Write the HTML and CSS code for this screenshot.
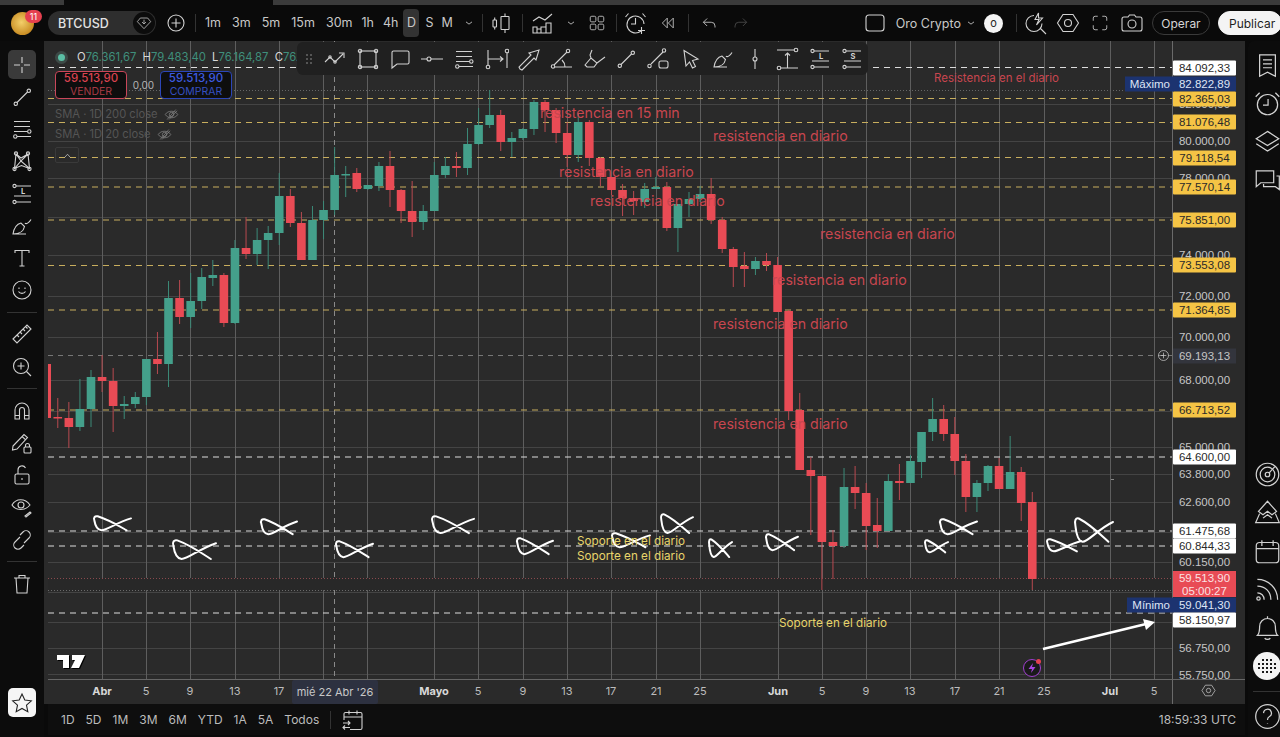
FILE: index.html
```html
<!DOCTYPE html>
<html lang="es">
  <head>
    <meta charset="UTF-8" />
    <meta name="viewport" content="width=device-width, initial-scale=1.0" />
    <title>BTCUSD - Oro Crypto</title>
    <link rel="stylesheet" href="styles.css">
  </head>
  <body>
    <svg class="icon-defs" width="0" height="0" aria-hidden="true">
      <symbol id="i-cross" viewBox="0 0 24 24"><path d="M12 4v6M12 14v6M4 12h6M14 12h6"/></symbol>
      <symbol id="i-line" viewBox="0 0 24 24"><path d="M7 17.5 17.5 7"/><circle cx="5.8" cy="18.8" r="1.7"/><circle cx="18.8" cy="5.8" r="1.7"/></symbol>
      <symbol id="i-fib" viewBox="0 0 24 24"><path d="M4 4.5h16M4 9.500h16M4 14.500h13.500M7 19.500h14"/><circle cx="19.300" cy="14.500" r="1.700"/><circle cx="5.300" cy="19.500" r="1.700"/></symbol>
      <symbol id="i-nodes" viewBox="0 0 24 24"><path d="M6 5 4.500 19.500 11 12 19.500 19.500 18 5 11 12ZM6 5l5 4 7-4M4.500 19.500l7-3 8 3"/><circle cx="6" cy="4.500" r="1.600"/><circle cx="18" cy="4.500" r="1.600"/><circle cx="4.500" cy="20" r="1.600"/><circle cx="19.500" cy="20" r="1.600"/></symbol>
      <symbol id="i-long" viewBox="0 0 24 24"><path d="M6 4h15M4 14h17M6 20h15"/><circle cx="4.500" cy="4" r="1.600"/><circle cx="4.500" cy="20" r="1.600"/><text class="glyph" x="13" y="11.500" text-anchor="middle">L</text></symbol>
      <symbol id="i-short" viewBox="0 0 24 24"><path d="M6 4h15M4 14h17M6 20h15"/><circle cx="4.500" cy="4" r="1.600"/><circle cx="4.500" cy="20" r="1.600"/><text class="glyph" x="13" y="11.500" text-anchor="middle">S</text></symbol>
      <symbol id="i-brush" viewBox="0 0 24 24"><path d="M3 20c1-6 4-10 8-11l3.500 3.500c-1 5-5.500 7.500-11.500 7.500ZM3 20h13M15 9c1 1.500 4 0 6-3.500"/></symbol>
      <symbol id="i-text" viewBox="0 0 24 24"><path d="M5 7V4.500h14V7M12 4.500V20M9.500 20h5"/></symbol>
      <symbol id="i-smile" viewBox="0 0 24 24"><circle cx="12" cy="12" r="9"/><path d="M8.500 13.500c1.500 2.500 5.500 2.500 7 0M9 9.500v1.500M15 9.500v1.500"/></symbol>
      <symbol id="i-ruler" viewBox="0 0 24 24"><path d="M3 17 17 3l4 4L7 21ZM7 13l2 2M10 10l2 2M13 7l2 2M16 5l1.500 1.500"/></symbol>
      <symbol id="i-zoom" viewBox="0 0 24 24"><circle cx="11" cy="11" r="7.500"/><path d="M16.500 16.500 21 21M11 7.500v7M7.500 11h7"/></symbol>
      <symbol id="i-magnet" viewBox="0 0 24 24"><path d="M5 20v-9a7 7 0 0 1 14 0v9h-4.500v-9a2.500 2.500 0 0 0-5 0v9ZM5 16.500h4.500M14.500 16.500H19"/></symbol>
      <symbol id="i-pencil-lock" viewBox="0 0 24 24"><path d="M3 15 14 3.500l3.500 3L7 18l-4.500 1ZM12 5.500l3.500 3.200"/><rect x="14" y="16" width="7" height="6" rx="1"/><path d="M15.500 16v-1.500a2 2 0 0 1 4 0V16"/></symbol>
      <symbol id="i-lock" viewBox="0 0 24 24"><rect x="5" y="11" width="14" height="10" rx="1.500"/><path d="M8 11V7a4 4 0 0 1 7.500-2M12 15v2"/></symbol>
      <symbol id="i-eye" viewBox="0 0 24 24"><path d="M2 10c4-7 13-7 18 0-5 6-14 6-18 0Z"/><circle cx="11" cy="10" r="3"/><path d="m15 21 5-4 1 1-5 4Z"/></symbol>
      <symbol id="i-link" viewBox="0 0 24 24"><path d="m10 7 3-3a4 4 0 0 1 6 6l-5 5M14 17l-3 3a4 4 0 0 1-6-6l5-5"/></symbol>
      <symbol id="i-trash" viewBox="0 0 24 24"><path d="M4 6h16M9 6V3.500h6V6M6 6l1 15h10l1-15"/></symbol>
      <symbol id="i-star" viewBox="0 0 24 24"><path d="m12 3 2.800 6 6.500.8-4.800 4.400 1.300 6.500L12 17.400l-5.800 3.300 1.300-6.500L2.700 9.800 9.200 9Z"/></symbol>
      <symbol id="i-trend" viewBox="0 0 24 24"><path d="m2 15 5-5 5 5 8-8M16 6h5v5"/><circle cx="7" cy="10" r="1.200"/><circle cx="12" cy="15" r="1.200"/></symbol>
      <symbol id="i-rect" viewBox="0 0 24 24"><rect x="4" y="4" width="16" height="16"/><circle cx="4" cy="4" r="1.700"/><circle cx="20" cy="4" r="1.700"/><circle cx="4" cy="20" r="1.700"/><circle cx="20" cy="20" r="1.700"/></symbol>
      <symbol id="i-note" viewBox="0 0 24 24"><path d="M4 5.500A1.500 1.500 0 0 1 5.500 4h14A1.500 1.500 0 0 1 21 5.500v10a1.500 1.500 0 0 1-1.500 1.500H9l-5 4Z"/></symbol>
      <symbol id="i-ray" viewBox="0 0 24 24"><path d="M1 12h6M11 12h12"/><circle cx="9" cy="12" r="2"/></symbol>
      <symbol id="i-measure" viewBox="0 0 24 24"><path d="M3 3v15M22 6v15M3 12h15M15 9.500l3 2.500-3 2.500"/><circle cx="3" cy="20" r="1.800"/><circle cx="22" cy="4" r="1.800"/></symbol>
      <symbol id="i-arrow" viewBox="0 0 24 24"><path d="m3 22-1-2 12-12-2-2 10-3-3 10-2-2L5 23Z"/></symbol>
      <symbol id="i-angle" viewBox="0 0 24 24"><path d="M5 18 18 5M6 20h17M13 13c2 2 3 4 3 7"/><circle cx="4" cy="19.500" r="1.700"/><circle cx="19" cy="4" r="1.700"/></symbol>
      <symbol id="i-marker" viewBox="0 0 24 24"><path d="m3 18 6-7 6 5-3 4H5ZM9 11l-1-3 2-5M15 16l8-6M7 20h5"/></symbol>
      <symbol id="i-seg-box" viewBox="0 0 24 24"><path d="M5 17 17 5"/><circle cx="3.500" cy="19" r="1.700"/><circle cx="18" cy="3.500" r="1.700"/><rect x="13" y="14" width="9" height="7" rx="2"/></symbol>
      <symbol id="i-cursor" viewBox="0 0 24 24"><path d="M5 3.500 19 12l-5.500 1.500 3 6-3 1.500-3-6L7 19Z"/></symbol>
      <symbol id="i-vline" viewBox="0 0 24 24"><path d="M12 2v8M12 14v8"/><circle cx="12" cy="12" r="2"/></symbol>
      <symbol id="i-range" viewBox="0 0 24 24"><path d="M2 3h17M6 21h17M12.500 6v15M10 8.500 12.500 6 15 8.500"/><circle cx="21" cy="3" r="1.800"/><circle cx="4" cy="21" r="1.800"/></symbol>
      <symbol id="i-diamond" viewBox="0 0 24 24"><path d="M6.500 4.500h11L22 10 12 20.500 2 10ZM12 7v6M9 10.500l3 3 3-3"/></symbol>
      <symbol id="i-plus" viewBox="0 0 24 24"><circle cx="12" cy="12" r="8"/><path d="M12 7.500v9M7.500 12h9"/></symbol>
      <symbol id="i-chev" viewBox="0 0 24 24"><path d="m8 10.500 4 3 4-3"/></symbol>
      <symbol id="i-up" viewBox="0 0 24 24"><path d="m7.500 15 4.500-5 4.500 5"/></symbol>
      <symbol id="i-candles" viewBox="0 0 24 24"><rect x="3" y="9" width="3.500" height="7" rx=".5"/><path d="M4.700 6.500V9M4.700 16v2.500"/><rect x="11" y="5.500" width="8" height="13" rx=".5"/><path d="M15 2.500v3M15 18.500v3.500"/></symbol>
      <symbol id="i-indicators" viewBox="0 0 24 24"><path d="m2 10 6-4 6 3 7-6M2 16h4v6H2ZM6 18h4v4H6ZM10 16h5v6h-5ZM15 12h5v10h-5Z"/></symbol>
      <symbol id="i-grid" viewBox="0 0 24 24"><rect x="3" y="3" width="7.500" height="7.500" rx="2"/><rect x="13.500" y="3" width="7.500" height="7.500" rx="2"/><rect x="3" y="13.500" width="7.500" height="7.500" rx="2"/><rect x="13.500" y="13.500" width="7.500" height="7.500" rx="2"/></symbol>
      <symbol id="i-alarm" viewBox="0 0 24 24"><path d="M17 20a8.500 8.500 0 1 1 3-7M11.500 7v6H7M17.500 16v7M14 19.500h7M1.500 6l3-3.500M21.500 6l-3-3.500"/></symbol>
      <symbol id="i-replay" viewBox="0 0 24 24"><path d="M11 5.500 4.500 12l6.500 6.500ZM19 5.500 12.500 12l6.500 6.500Z"/></symbol>
      <symbol id="i-undo" viewBox="0 0 24 24"><path d="m9.500 6-5 5 5 5M4.500 11H15a5 5 0 0 1 5 5v2"/></symbol>
      <symbol id="i-redo" viewBox="0 0 24 24"><path d="m14.500 6 5 5-5 5M19.500 11H9a5 5 0 0 0-5 5v2"/></symbol>
      <symbol id="i-layout" viewBox="0 0 24 24"><rect x="3" y="4" width="18" height="16" rx="3"/></symbol>
      <symbol id="i-flash" viewBox="0 0 24 24"><path d="M10 4.500a8 8 0 1 0 8 8M16.500 17.500 22 23M14.500 2l-3.500 6.500h4L12.500 14l6-7h-4Z"/></symbol>
      <symbol id="i-hex" viewBox="0 0 24 24"><path d="M7 3.500h10l5.500 8.500-5.500 8.500H7L1.500 12Z"/><circle cx="12" cy="12" r="3.500"/></symbol>
      <symbol id="i-full" viewBox="0 0 24 24"><path d="M3 9V5.500A2.500 2.500 0 0 1 5.500 3H9M15 3h3.500A2.500 2.500 0 0 1 21 5.500V9M21 15v3.500a2.500 2.500 0 0 1-2.500 2.500H15M9 21H5.500A2.500 2.500 0 0 1 3 18.500V15"/></symbol>
      <symbol id="i-camera" viewBox="0 0 24 24"><path d="M2 8a2 2 0 0 1 2-2h4l1.500-2h5L16 6h4a2 2 0 0 1 2 2v10a2 2 0 0 1-2 2H4a2 2 0 0 1-2-2Z"/><circle cx="12" cy="13" r="4"/></symbol>
      <symbol id="i-eye-off" viewBox="0 0 24 24"><path d="M2 12c4-7 16-7 20 0-4 7-16 7-20 0Z"/><circle cx="12" cy="12" r="3.500"/><path d="M5 20 19 4M8 20 21 6"/></symbol>
      <symbol id="i-calendar-swap" viewBox="0 0 24 24"><path d="M3 12V6a1.500 1.500 0 0 1 1.500-1.500h15A1.500 1.500 0 0 1 21 6v14a1.500 1.500 0 0 1-1.500 1.500H9M3 9h18M8 2.500v4M16 2.500v4M2 15h7M7 13l2 2-2 2M9 19.500H2M4 17.500l-2 2 2 2"/></symbol>
      <symbol id="i-list" viewBox="0 0 24 24"><path d="M5 2.500h14v19l-7-3.500-7 3.500ZM8 7h8M8 10.500h8M8 14h8"/></symbol>
      <symbol id="i-clock" viewBox="0 0 24 24"><circle cx="12" cy="13" r="9"/><path d="M12.500 8v5.500H8M1.500 6 5 2.500M22.500 6 19 2.500"/></symbol>
      <symbol id="i-layers" viewBox="0 0 24 24"><path d="M12 3 22 9.500 12 15.500 2 9.500ZM2 14l10 6.500L22 14"/></symbol>
      <symbol id="i-chat" viewBox="0 0 24 24"><path d="M2 3.500h15.500V14H6l-4 3.500ZM20 8h2.500v12l-3.500-2.500H8.500V15"/></symbol>
      <symbol id="i-radar" viewBox="0 0 24 24"><circle cx="12" cy="12" r="10"/><circle cx="12" cy="12" r="6.500"/><circle cx="12" cy="12" r="2"/><path d="m13.500 10.500 5-5.500"/></symbol>
      <symbol id="i-peaks" viewBox="0 0 24 24"><path d="M12 2 20 11l-4 3-4-3-4 3-4-3ZM5 13 1.500 21h21L19 13M8 17l4-3 4 3"/></symbol>
      <symbol id="i-calendar" viewBox="0 0 24 24"><rect x="2" y="4" width="20" height="18" rx="3"/><path d="M2 9.500h20M7 2v5M17 2v5"/></symbol>
      <symbol id="i-signal" viewBox="0 0 24 24"><path d="M3 3c10 0 18 8 18 18M3 9c7 0 12 5 12 12M3 15c3.500 0 6 2.500 6 6"/><circle cx="4" cy="20" r="1.500"/></symbol>
      <symbol id="i-bell" viewBox="0 0 24 24"><path d="M3 19c2-2 2-4 2-8a7 7 0 0 1 14 0c0 4 0 6 2 8ZM12 2v2M9.500 21.500c1 1.500 4 1.500 5 0"/></symbol>
      <symbol id="i-help" viewBox="0 0 24 24"><circle cx="12" cy="12" r="10.500"/><path d="M8.500 9a3.500 3.500 0 1 1 5 3.200c-1 .5-1.500 1.300-1.500 2.800M12 18v.5"/></symbol>
    </svg>

    <div class="window-strip"><span class="strip-seg strip-left"></span><span class="strip-seg strip-gap"></span><span class="strip-seg strip-right"></span></div>

    <div class="header">
      <div class="avatar"><span class="avatar-badge">11</span></div>
      <div class="symbol-pill">
        <span>BTCUSD</span>
        <span class="symbol-badge"><svg class="icon small"><use href="#i-diamond"/></svg></span>
      </div>
      <button class="head-btn add-btn"><svg class="icon"><use href="#i-plus"/></svg></button>
      <span class="head-sep"></span>
      <div class="intervals">
        <a>1m</a><a>3m</a><a>5m</a><a>15m</a><a>30m</a><a>1h</a><a>4h</a><a class="active">D</a><a>S</a><a>M</a>
      </div>
      <button class="head-btn chev-btn"><svg class="icon small"><use href="#i-chev"/></svg></button>
      <span class="head-sep"></span>
      <button class="head-btn wide"><svg class="icon"><use href="#i-candles"/></svg></button>
      <span class="head-sep roomy"></span>
      <button class="head-btn wide"><svg class="icon"><use href="#i-indicators"/></svg></button>
      <button class="head-btn chev-btn indicators-chev"><svg class="icon small"><use href="#i-chev"/></svg></button>
      <button class="head-btn wide"><svg class="icon small"><use href="#i-grid"/></svg></button>
      <span class="head-sep"></span>
      <button class="head-btn wide"><svg class="icon"><use href="#i-alarm"/></svg></button>
      <button class="head-btn wide"><svg class="icon small"><use href="#i-replay"/></svg></button>
      <span class="head-sep roomy"></span>
      <button class="head-btn wide"><svg class="icon small"><use href="#i-undo"/></svg></button>
      <button class="head-btn wide muted"><svg class="icon small"><use href="#i-redo"/></svg></button>

      <div class="header-right">
        <svg class="icon"><use href="#i-layout"/></svg>
        <span class="layout-name">Oro Crypto</span>
        <button class="head-btn chev-btn"><svg class="icon small"><use href="#i-chev"/></svg></button>
        <span class="user-dot">o</span>
        <span class="head-sep"></span>
        <button class="head-btn wide"><svg class="icon"><use href="#i-flash"/></svg></button>
        <button class="head-btn wide"><svg class="icon"><use href="#i-hex"/></svg></button>
        <button class="head-btn wide"><svg class="icon small"><use href="#i-full"/></svg></button>
        <button class="head-btn wide"><svg class="icon"><use href="#i-camera"/></svg></button>
        <button class="pill-btn">Operar</button>
        <button class="pill-btn publish">Publicar</button>
      </div>
    </div>

    <div class="main-content">
      <div class="left-bar">
        <button class="tool active"><svg class="icon"><use href="#i-cross"/></svg></button>
        <button class="tool"><svg class="icon"><use href="#i-line"/></svg></button>
        <button class="tool"><svg class="icon"><use href="#i-fib"/></svg></button>
        <button class="tool"><svg class="icon"><use href="#i-nodes"/></svg></button>
        <button class="tool"><svg class="icon"><use href="#i-long"/></svg></button>
        <button class="tool"><svg class="icon"><use href="#i-brush"/></svg></button>
        <button class="tool"><svg class="icon"><use href="#i-text"/></svg></button>
        <button class="tool"><svg class="icon"><use href="#i-smile"/></svg></button>
        <span class="bar-sep"></span>
        <button class="tool"><svg class="icon"><use href="#i-ruler"/></svg></button>
        <button class="tool"><svg class="icon"><use href="#i-zoom"/></svg></button>
        <span class="bar-sep"></span>
        <button class="tool"><svg class="icon"><use href="#i-magnet"/></svg></button>
        <button class="tool"><svg class="icon"><use href="#i-pencil-lock"/></svg></button>
        <button class="tool"><svg class="icon"><use href="#i-lock"/></svg></button>
        <button class="tool"><svg class="icon"><use href="#i-eye"/></svg></button>
        <button class="tool"><svg class="icon"><use href="#i-link"/></svg></button>
        <span class="bar-sep"></span>
        <button class="tool"><svg class="icon"><use href="#i-trash"/></svg></button>
        <button class="tool star"><svg class="icon"><use href="#i-star"/></svg></button>
      </div>

      <div class="chart-column">
        <div class="pane" id="pane">
          <svg class="plot" id="plot" viewBox="44 41 1201 663"></svg>

          <div class="legend">
            <div class="legend-ohlc">
              <span class="status-dot"></span>
              <span class="ohlc"><b>O</b>76.361,67 <b>H</b>79.483,40 <b>L</b>76.164,87 <b>C</b>76.361,67</span>
            </div>
            <div class="trade-row">
              <div class="trade-box sell"><strong>59.513,90</strong><span>VENDER</span></div>
              <span class="spread">0,00</span>
              <div class="trade-box buy"><strong>59.513,90</strong><span>COMPRAR</span></div>
            </div>
            <div class="study">SMA · 1D 200 close <svg class="icon tiny"><use href="#i-eye-off"/></svg></div>
            <div class="study">SMA · 1D 20 close <svg class="icon tiny"><use href="#i-eye-off"/></svg></div>
            <div class="legend-toggle"><svg class="icon tiny"><use href="#i-up"/></svg></div>
          </div>

          <div class="float-bar">
            <span class="drag-dots"></span>
            <svg class="icon"><use href="#i-trend"/></svg>
            <svg class="icon"><use href="#i-rect"/></svg>
            <svg class="icon"><use href="#i-note"/></svg>
            <svg class="icon"><use href="#i-ray"/></svg>
            <svg class="icon"><use href="#i-fib"/></svg>
            <svg class="icon"><use href="#i-measure"/></svg>
            <svg class="icon"><use href="#i-arrow"/></svg>
            <svg class="icon"><use href="#i-angle"/></svg>
            <svg class="icon"><use href="#i-marker"/></svg>
            <svg class="icon"><use href="#i-line"/></svg>
            <svg class="icon"><use href="#i-seg-box"/></svg>
            <svg class="icon"><use href="#i-cursor"/></svg>
            <svg class="icon"><use href="#i-brush"/></svg>
            <svg class="icon"><use href="#i-vline"/></svg>
            <svg class="icon"><use href="#i-range"/></svg>
            <svg class="icon"><use href="#i-long"/></svg>
            <svg class="icon"><use href="#i-short"/></svg>
          </div>

          <div class="tv-logo">
            <svg width="28" height="15" viewBox="0 0 28 15"><path d="M0 1h12v13H6V6H0zM15 1h13l-6 13h-8l4-8h-3z"/></svg>
          </div>

          <span class="date-pill">mié 22 Abr '26</span>
          <button class="crosshair-add"><svg class="icon tiny"><use href="#i-plus"/></svg></button>
          <button class="axis-gear"><svg class="icon tiny"><use href="#i-hex"/></svg></button>
          <span class="bolt-badge"><svg width="12" height="12" viewBox="0 0 12 12"><path d="M7 1 2.500 7H6l-1 4 4.500-6H6z"/></svg></span>
        </div>

        <div class="range-bar">
          <a>1D</a><a>5D</a><a>1M</a><a>3M</a><a>6M</a><a>YTD</a><a>1A</a><a>5A</a><a>Todos</a>
          <span class="head-sep"></span>
          <svg class="icon"><use href="#i-calendar-swap"/></svg>
          <span class="clock">18:59:33 UTC</span>
        </div>
      </div>

      <div class="right-bar">
        <button class="side"><svg class="icon big"><use href="#i-list"/></svg></button>
        <button class="side"><svg class="icon big"><use href="#i-clock"/></svg></button>
        <button class="side"><svg class="icon big"><use href="#i-layers"/></svg></button>
        <button class="side"><svg class="icon big"><use href="#i-chat"/></svg></button>
        <button class="side push"><svg class="icon big"><use href="#i-radar"/></svg></button>
        <button class="side"><svg class="icon big"><use href="#i-peaks"/></svg></button>
        <button class="side"><svg class="icon big"><use href="#i-calendar"/></svg></button>
        <button class="side"><svg class="icon big"><use href="#i-signal"/></svg></button>
        <button class="side"><svg class="icon big"><use href="#i-bell"/></svg></button>
        <button class="side">
          <svg class="apps" width="28" height="28" viewBox="0 0 28 28">
            <circle class="apps-bg" cx="14" cy="14" r="14"/>
            <path class="apps-dots" d="M9 7h2v2H9zM13 7h2v2h-2zM17 7h2v2h-2zM5 11h2v2H5zM9 11h2v2H9zM13 11h2v2h-2zM17 11h2v2h-2zM21 11h2v2h-2zM5 15h2v2H5zM9 15h2v2H9zM13 15h2v2h-2zM17 15h2v2h-2zM21 15h2v2h-2zM9 19h2v2H9zM13 19h2v2h-2zM17 19h2v2h-2z"/>
          </svg>
        </button>
        <span class="side-sep"></span>
        <button class="side help"><svg class="icon big"><use href="#i-help"/></svg></button>
      </div>
    </div>

    <script src="chart.js"></script>
  </body>
</html>
```

FILE: styles.css
```css
html, body {
  height: 100%;
  margin: 0;
  padding: 0;
}
body {
  font-family: Inter, 'Noto Sans', sans-serif;
  color: #d6d6d6;
  background-color: #0a0a0a;
  display: flex;
  flex-direction: column;
  overflow: hidden;
}
button {
  background: none;
  border: none;
  padding: 0;
  color: inherit;
  font-family: inherit;
  display: flex;
  align-items: center;
  justify-content: center;
}
.icon-defs {
  position: absolute;
}
.icon {
  width: 24px;
  height: 24px;
  fill: none;
  stroke: #d2d2d2;
  stroke-width: 1.1;
  flex-shrink: 0;
}
.icon.small {
  width: 18px;
  height: 18px;
}
.icon.tiny {
  width: 15px;
  height: 15px;
}
.icon.big {
  width: 27px;
  height: 27px;
}
.glyph {
  font-size: 7.5px;
  font-weight: 700;
  fill: #d2d2d2;
  stroke: none;
}

.window-strip {
  display: flex;
  height: 5px;
  flex-shrink: 0;
}
.strip-seg {
  background-color: #3b3b3b;
}
.strip-left {
  width: 64px;
}
.strip-gap {
  width: 209px;
  background-color: #0a0a0a;
}
.strip-right {
  flex: 1;
}

.header {
  height: 36px;
  flex-shrink: 0;
  display: flex;
  align-items: center;
  padding-left: 11px;
  font-size: 12.5px;
}
.avatar {
  position: relative;
  width: 23px;
  height: 23px;
  border-radius: 50%;
  background: radial-gradient(circle at 45% 45%, #f3cf6a, #c98d24 70%, #8f6518);
  flex-shrink: 0;
}
.avatar-badge {
  position: absolute;
  left: 14px;
  top: -2px;
  width: 17px;
  height: 13px;
  border-radius: 7px;
  background-color: #e5404f;
  color: white;
  font-size: 9px;
  line-height: 13px;
  text-align: center;
}
.symbol-pill {
  margin-left: 14px;
  width: 108px;
  height: 24px;
  border-radius: 12px;
  background-color: #2e2e2e;
  display: flex;
  align-items: center;
  justify-content: space-between;
  padding: 0 1px 0 10px;
  box-sizing: border-box;
  font-weight: 500;
  color: #e4e4e4;
}
.symbol-badge {
  width: 22px;
  height: 22px;
  border-radius: 50%;
  background-color: #0c0c0c;
  display: flex;
  align-items: center;
  justify-content: center;
}
.symbol-badge .icon {
  width: 16px;
  height: 16px;
}
.head-btn {
  height: 28px;
}
.add-btn {
  margin-left: 8px;
  width: 24px;
}
.head-btn.wide {
  width: 32px;
}
.head-btn.muted .icon {
  stroke: #4e4e4e;
}
.chev-btn {
  width: 20px;
}
.indicators-chev {
  margin-left: 2px;
}
.head-sep {
  width: 1px;
  height: 18px;
  background-color: #333;
  margin: 0 3px;
  flex-shrink: 0;
}
.head-sep.roomy {
  margin: 0 4px;
}
.add-btn + .head-sep {
  margin: 0 4px 0 7px;
}
.intervals {
  display: flex;
  align-items: center;
  color: #c8c8c8;
  padding-left: 5px;
}
.intervals a {
  margin-right: 11px;
  line-height: 28px;
}
.intervals a:nth-child(n+5) {
  margin-right: 9px;
}
.intervals a.active {
  background-color: #333;
  border-radius: 4px;
  margin: 0 6px 0 -4px;
  width: 16px;
  text-align: center;
}
.intervals a:last-child {
  margin: 0 6px 0 -1px;
}
.header-right {
  margin-left: auto;
  display: flex;
  align-items: center;
}
.layout-name {
  margin-left: 9px;
  color: #c8c8c8;
}
.user-dot {
  width: 19px;
  height: 19px;
  border-radius: 50%;
  background-color: #f4f4f4;
  color: #222;
  font-size: 11px;
  line-height: 18px;
  text-align: center;
  margin: 0 10px 0 3px;
}
.pill-btn {
  height: 24px;
  border-radius: 12px;
  font-size: 12px;
  border: 1px solid #3a3a3a;
  width: 58px;
  margin-left: 4px;
  color: #d6d6d6;
}
.pill-btn.publish {
  background-color: #f4f4f4;
  border-color: #f4f4f4;
  color: #1e1e1e;
  width: 64px;
  margin-left: 8px;
  margin-right: -2px;
  justify-content: flex-start;
  padding-left: 10px;
}

.main-content {
  flex: 1;
  display: flex;
  min-height: 0;
}
.left-bar {
  width: 44px;
  flex-shrink: 0;
  display: flex;
  flex-direction: column;
  align-items: center;
  padding: 8px 0 20px;
  box-sizing: border-box;
  background-color: #0c0c0c;
}
.tool {
  width: 28px;
  height: 32.2px;
  flex-shrink: 0;
  border-radius: 5px;
}
.tool.active {
  background-color: #3a3a3a;
  height: 29px;
  margin: 1px 0 2px;
}
.tool.star {
  margin-top: auto;
  height: 29px;
  background-color: #f6f6f6;
}
.tool.star .icon {
  stroke: #222;
}
.bar-sep {
  width: 30px;
  height: 1px;
  background-color: #333;
  margin: 5.5px 0;
  flex-shrink: 0;
}
.chart-column {
  flex: 1;
  display: flex;
  flex-direction: column;
  min-width: 0;
}
.pane {
  position: relative;
  flex: 1;
  background-color: #2a2a2a;
  overflow: hidden;
}
.plot {
  position: absolute;
  left: 0;
  top: 0;
  width: 1201px;
  height: 663px;
}

.legend {
  position: absolute;
  left: 11px;
  top: 6px;
  font-size: 11.2px;
}
.legend-ohlc {
  display: flex;
  align-items: center;
  height: 20px;
  gap: 6px;
}
.status-dot {
  width: 7px;
  height: 7px;
  margin-left: 3px;
  border-radius: 50%;
  background-color: #5bbfa5;
  box-shadow: 0 0 0 3px #3d4a47;
}
.ohlc {
  white-space: nowrap;
  color: #3f8f7c;
  font-size: 11.3px;
  word-spacing: 3px;
  margin-left: 6px;
}
.ohlc b {
  font-weight: 400;
  color: #d8d8d8;
}
.trade-row {
  display: flex;
  align-items: center;
  margin-top: 4px;
}
.trade-box {
  width: 72px;
  height: 28px;
  box-sizing: border-box;
  border-radius: 4px;
  background-color: #0e0e0e;
  border: 1px solid;
  display: flex;
  flex-direction: column;
  align-items: center;
  justify-content: center;
  line-height: 13px;
  font-size: 10.5px;
}
.trade-box strong {
  font-weight: 500;
  font-size: 11.5px;
}
.trade-box.sell {
  border-color: #c9475a;
  color: #d9424f;
}
.trade-box.sell span {
  color: #a73a44;
}
.trade-box.buy {
  border-color: #2c46b8;
  color: #3d5be0;
}
.trade-box.buy span {
  color: #3550c0;
}
.spread {
  width: 33px;
  text-align: center;
  font-size: 10px;
  color: #b4b4b4;
}
.study {
  display: flex;
  align-items: center;
  gap: 6px;
  height: 20px;
  color: #555;
  white-space: nowrap;
}
.trade-row + .study {
  margin-top: 5px;
}
.study .icon {
  stroke: #8a8a8a;
}
.legend-toggle {
  width: 24px;
  height: 16px;
  margin-top: 3px;
  border: 1px solid #3a3a3a;
  border-radius: 2px;
  box-sizing: border-box;
  display: flex;
  align-items: center;
  justify-content: center;
}

.float-bar {
  position: absolute;
  left: 253px;
  top: 1px;
  width: 571px;
  height: 33px;
  background-color: #202020;
  border-radius: 6px;
  display: flex;
  align-items: center;
  gap: 8.3px;
  padding-left: 8px;
  box-sizing: border-box;
}
.drag-dots {
  width: 7px;
  height: 11px;
  margin-right: 3px;
  background-image: radial-gradient(circle, #555 1px, transparent 1.2px);
  background-size: 4px 4px;
}

.tv-logo {
  position: absolute;
  left: 13px;
  top: 612px;
  height: 15px;
}
.tv-logo svg {
  fill: white;
  filter: drop-shadow(1px 1px 0 #000);
}
.date-pill {
  position: absolute;
  left: 248px;
  top: 639px;
  width: 86px;
  height: 24px;
  background-color: #2d3140;
  border-radius: 2px;
  font-size: 11px;
  line-height: 24px;
  text-align: center;
  color: #c8c8c8;
}
.crosshair-add {
  position: absolute;
  left: 1112px;
  top: 307px;
  width: 15px;
  height: 15px;
}
.axis-gear {
  position: absolute;
  left: 1157px;
  top: 642px;
  width: 15px;
  height: 15px;
}
.bolt-badge {
  position: absolute;
  left: 979px;
  top: 618px;
  width: 18px;
  height: 18px;
  box-sizing: border-box;
  border: 1.5px solid #a03fd0;
  border-radius: 50%;
  background-color: #1a1a1a;
  display: flex;
  align-items: center;
  justify-content: center;
}
.bolt-badge svg {
  fill: #a845e0;
}
.bolt-badge::after {
  content: "";
  position: absolute;
  right: -1px;
  top: -1px;
  width: 5px;
  height: 5px;
  border-radius: 50%;
  background-color: #e5404f;
}

.note {
  position: absolute;
  white-space: nowrap;
  transform: translateY(-50%);
  font-size: 14.2px;
  color: #c8464f;
}
.note.small {
  font-size: 11.5px;
}
.note.support {
  font-size: 11.7px;
  color: #e8d56a;
}
.price {
  position: absolute;
  width: 63px;
  height: 15px;
  line-height: 15px;
  text-align: center;
  font-family: 'Liberation Sans', Arial, sans-serif;
  font-size: 11.5px;
  transform: translateY(-50%);
  color: #c6c6c6;
}
.price.white {
  background-color: white;
  color: #2a2a2a;
  border-radius: 1px;
}
.price.yellow {
  background-color: #f5c445;
  color: #2a2a2a;
  border-radius: 1px;
}
.price.navy {
  background-color: #1c3370;
  color: #dfe5f5;
}
.price.hover {
  background-color: #33353d;
  color: #c6c6c6;
}
.price.last {
  height: 26px;
  line-height: 12.5px;
  padding-top: 1px;
  box-sizing: border-box;
  background-color: #e84b55;
  color: #fbe1e3;
}
.price-tag {
  position: absolute;
  right: 100%;
  top: 0;
  padding: 0 3px 0 5px;
  background-color: #1c3370;
  color: #dfe5f5;
}
.tick {
  position: absolute;
  transform: translateX(-50%);
  font-size: 11px;
  line-height: 14px;
  color: #bcbcbc;
}
.tick.month {
  font-weight: 700;
  color: #d8d8d8;
}

.range-bar {
  height: 31px;
  margin-bottom: 2px;
  margin-left: 4px;
  flex-shrink: 0;
  background-color: #0e0e0e;
  display: flex;
  align-items: center;
  padding: 0 9px 0 13px;
  gap: 11px;
  font-size: 12px;
  color: #bcbcbc;
}
.range-bar .head-sep {
  margin: 0 -1px 0 0;
}
.clock {
  margin-left: auto;
}

.right-bar {
  width: 32px;
  margin-left: 3px;
  flex-shrink: 0;
  display: flex;
  flex-direction: column;
  padding: 5px 0 1px;
  box-sizing: border-box;
  background-color: #0c0c0c;
  border-top-left-radius: 6px;
  overflow: hidden;
}
.side {
  width: 38px;
  height: 38.3px;
  flex-shrink: 0;
}
.side.help {
  height: 38.8px;
}
.side.push {
  margin-top: auto;
}
.side-sep {
  width: 32px;
  height: 1px;
  background-color: #333;
  margin: 6px 0 5px 5px;
  flex-shrink: 0;
}
.apps {
  flex-shrink: 0;
}
.apps-bg {
  fill: #f4f4f4;
}
.apps-dots {
  fill: #1a1a1a;
}
```

FILE: chart.js
```js
// everything is in page pixels, the plot viewBox starts at the pane corner
var PANE_X = 44, PANE_Y = 41, AXIS_X = 1172;
var SVG_NS = 'http://www.w3.org/2000/svg';
var plot = document.getElementById('plot');
var pane = document.getElementById('pane');

// [up?, wickTop, bodyTop, bodyBottom, wickBottom]
var candles = [
  [0,364,364,418,418],[0,398,417,418,428],[0,402,418,427,448],[1,379,409,427,431],[1,370,377,409,427],
  [0,355,377,381,392],[0,368,381,406,432],[1,396,404,406,419],[1,392,397,404,408],[1,359,359,397,405],
  [0,332,359,364,374],[1,281,298,364,387],[0,280,298,317,324],[1,273,301,317,328],[1,268,277,301,309],
  [1,260,275,278,286],[0,273,275,323,327],[1,240,248,323,324],[0,217,248,254,259],[1,228,240,254,265],
  [1,226,233,240,269],[1,173,196,233,245],[0,189,196,223,227],[0,212,223,260,260],[1,206,220,260,260],
  [1,201,210,220,239],[1,147,175,210,215],[1,166,174,175,197],[0,168,173,189,192],[1,185,185,189,190],
  [1,162,166,186,191],[0,151,166,190,207],[0,189,190,211,223],[0,181,211,222,237],[1,205,211,222,230],
  [1,162,175,211,211],[1,157,166,175,178],[0,152,166,168,177],[1,128,144,168,175],[1,108,125,144,145],
  [1,90,115,125,128],[0,110,115,142,151],[1,132,138,142,157],[1,128,129,138,140],[1,100,102,129,135],
  [0,100,102,110,132],[0,108,110,133,143],[0,122,133,155,167],[1,113,122,155,162],[0,120,122,158,166],
  [0,157,158,177,186],[0,177,177,190,195],[0,184,190,198,216],[0,191,198,201,215],[1,183,189,202,208],
  [1,177,187,189,189],[0,182,187,228,231],[1,204,204,228,252],[1,192,199,204,217],[1,186,194,199,202],
  [0,178,194,220,224],[0,217,220,249,253],[0,247,249,267,287],[0,252,266,269,287],[1,257,261,269,275],
  [0,253,261,265,271],[0,257,265,312,312],[0,310,311,411,420],[0,393,410,470,470],[0,457,470,476,535],
  [0,476,476,542,590],[0,530,542,546,579],[1,468,487,546,548],[0,466,487,493,509],[0,483,493,526,550],
  [0,498,525,531,548],[1,474,481,531,531],[0,464,481,483,500],[1,455,461,483,483],[1,432,432,462,478],
  [1,398,419,432,441],[0,405,419,434,441],[0,417,434,461,475],[0,454,461,497,512],[1,480,483,497,512],
  [1,465,466,483,491],[0,458,466,489,489],[1,436,472,489,489],[0,467,472,503,521],[0,492,502,579,590]
];

var gridY = [104, 141, 178, 217, 255, 296, 337, 380, 411, 447, 474, 502, 532, 562, 592, 622, 648, 674];
var gridX = [102, 146, 190, 235, 279, 323, 367, 434, 478, 523, 567, 611, 656, 700, 778, 822, 866, 910, 955, 999, 1044, 1110, 1154];
var levels = [
  [67, 'w'], [98, 'y'], [122, 'y'], [157, 'y'], [186.5, 'y'], [219.5, 'y'], [265, 'y'], [309.5, 'y'],
  [409.5, 'y'], [456.5, 'w'], [530.5, 'w'], [545.5, 'w'], [612.5, 'w']
];

// x, y, width, height of each hand drawn mark
var marks = [
  [94,516,37,15], [173,540,43,20], [261,519,36,16], [336,541,37,17], [432,516,42,18], [517,538,36,17],
  [612,533,38,15], [661,514,32,20], [709,539,23,19], [766,534,32,17], [925,540,23,13], [940,519,37,16],
  [1047,539,34,13], [1075,518,38,25]
];
var MARK_PATH = 'M88 95C70 70 40 25 10 2 2-2-2 10 1 30 3 60 8 92 20 95 35 95 60 45 100 16';

var notes = [
  [934, 78, 'Resistencia en el diario', 'small'], [540, 112, 'resistencia en 15 min'],
  [713, 135, 'resistencia en diario'], [559, 171, 'resistencia en diario'],
  [590, 200, 'resistencia en diario'], [820, 233, 'resistencia en diario'],
  [772, 279, 'resistencia en diario'], [713, 323, 'resistencia en diario'],
  [713, 423, 'resistencia en diario'], [577, 541, 'Soporte en el diario', 'support'],
  [577, 556, 'Soporte en el diario', 'support'], [779, 623, 'Soporte en el diario', 'support']
];

// plain axis values first so the coloured ones sit on top
var prices = [
  [104, '82.000,00'], [141, '80.000,00'], [178, '78.000,00'], [255, '74.000,00'], [296, '72.000,00'],
  [337, '70.000,00'], [380, '68.000,00'], [447, '65.000,00'], [474, '63.800,00'], [502, '62.600,00'],
  [562, '60.150,00'], [648, '56.750,00'], [674.5, '55.750,00'],
  [67.5, '84.092,33', 'white'], [83.5, '82.822,89', 'navy', 'Máximo'], [98.5, '82.365,03', 'yellow'],
  [121.5, '81.076,48', 'yellow'], [157.5, '79.118,54', 'yellow'], [186.5, '77.570,14', 'yellow'],
  [220, '75.851,00', 'yellow'], [265, '73.553,08', 'yellow'], [310, '71.364,85', 'yellow'],
  [355.5, '69.193,13', 'hover'], [409.5, '66.713,52', 'yellow'], [456.5, '64.600,00', 'white'],
  [530.5, '61.475,68', 'white'], [545.5, '60.844,33', 'white'], [605, '59.041,30', 'navy', 'Mínimo'],
  [619.5, '58.150,97', 'white'], [584, '59.513,90<br>05:00:27', 'last']
];

var ticks = [
  [102, 'Abr', 1], [146, '5'], [190, '9'], [235, '13'], [279, '17'], [434, 'Mayo', 1], [478, '5'], [523, '9'],
  [567, '13'], [611, '17'], [656, '21'], [700, '25'], [778, 'Jun', 1], [822, '5'], [866, '9'], [910, '13'],
  [955, '17'], [999, '21'], [1044, '25'], [1110, 'Jul', 1], [1154, '5']
];

function el(name, attrs, parent) {
  var node = document.createElementNS(SVG_NS, name);
  for (var key in attrs) node.setAttribute(key, attrs[key]);
  (parent || plot).appendChild(node);
  return node;
}

function line(x1, y1, x2, y2, color, dash) {
  var attrs = { x1: x1, y1: y1, x2: x2, y2: y2, stroke: color, 'stroke-width': 1 };
  if (dash) attrs['stroke-dasharray'] = dash;
  return el('line', attrs);
}

function html(cls, left, top, content) {
  var node = document.createElement('div');
  node.className = cls;
  node.style.left = (left - PANE_X) + 'px';
  node.style.top = (top - PANE_Y) + 'px';
  node.innerHTML = content;
  pane.appendChild(node);
  return node;
}

gridY.forEach(function (y) { line(48, y + 0.5, AXIS_X, y + 0.5, '#444444'); });
gridX.forEach(function (x) { line(x + 0.5, 41, x + 0.5, 680, '#5e5e5e'); });
line(334.5, 41, 334.5, 680, '#8a8a8a', '5 4');
line(48, 355.5, AXIS_X, 355.5, '#777777', '5 5');

// the bid/ask band near the last price
el('rect', { x: 48, y: 578, width: 1124, height: 12, fill: '#282828' });
line(48, 578.5, AXIS_X, 578.5, '#8a4a4e', '1 2');
line(48, 590.5, AXIS_X, 590.5, '#6a6a6a', '1 2');
line(48, 90.5, AXIS_X, 90.5, '#666666', '1 2');

levels.forEach(function (l) {
  line(48, l[0] + 0.5, AXIS_X, l[0] + 0.5, l[1] === 'w' ? '#dcdcdc' : '#c8ae5e', '6 5');
});

var clip = el('clipPath', { id: 'plot-clip' });
el('rect', { x: 48, y: 41, width: 1124, height: 640 }, clip);
var series = el('g', { 'clip-path': 'url(#plot-clip)' });

candles.forEach(function (c, i) {
  var x = 46.7 + 11.074 * i;
  el('rect', { x: x - 0.5, y: c[1], width: 1, height: c[4] - c[1], fill: c[0] ? '#3c8a78' : '#b84a50' }, series);
  el('rect', { x: x - 4.3, y: c[2], width: 8.6, height: Math.max(c[3] - c[2], 1.5), fill: c[0] ? '#44a08b' : '#e94b55' }, series);
});

marks.forEach(function (m) {
  el('path', {
    d: MARK_PATH,
    fill: 'none',
    stroke: '#ffffff',
    'stroke-width': 2,
    'stroke-linecap': 'round',
    'vector-effect': 'non-scaling-stroke',
    transform: 'translate(' + m[0] + ' ' + m[1] + ') scale(' + m[2] / 100 + ' ' + m[3] / 100 + ')'
  });
});

// arrow drawn under the lowest label
line(1043, 649, 1146, 624, '#ffffff').setAttribute('stroke-width', 2.5);
el('path', { d: 'M1155 622 1143 619 1146 630Z', fill: '#ffffff' });

// axes
line(AXIS_X + 0.5, 41, AXIS_X + 0.5, 704, '#6a6a6a');
line(48, 679.5, 1245, 679.5, '#666666');
line(1111, 479.5, 1114, 479.5, '#888888');

notes.forEach(function (n) {
  html('note' + (n[3] ? ' ' + n[3] : ''), n[0], n[1], n[2]);
});

prices.forEach(function (p) {
  var node = html('price' + (p[2] ? ' ' + p[2] : ''), AXIS_X + 1, p[0], p[1]);
  if (p[3]) {
    var tag = document.createElement('span');
    tag.className = 'price-tag';
    tag.textContent = p[3];
    node.appendChild(tag);
  }
});

ticks.forEach(function (t) {
  html('tick' + (t[2] ? ' month' : ''), t[0], 684, t[1]);
});
```
